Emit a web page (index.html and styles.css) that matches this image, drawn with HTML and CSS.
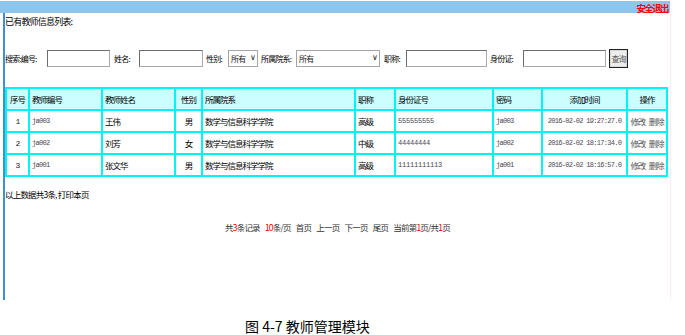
FILE: index.html
```html
<!DOCTYPE html>
<html lang="zh-CN">
<head>
    <meta charset="UTF-8">
    <title>教师管理模块</title>
    <link rel="stylesheet" href="styles.css">
</head>
<body>
    <div class="topbar"><span class="logout">安全退出</span></div>

    <div class="panel">
        <p class="title">已有教师信息列表:</p>

        <form class="search">
            <label class="lbl l-no">搜索:编号:</label>
            <input type="text" class="box w-no">
            <label class="lbl l-name">姓名:</label>
            <input type="text" class="box w-name">
            <label class="lbl l-sex">性别:</label>
            <span class="drop w-sex"><select class="sel"><option>所有</option></select></span>
            <label class="lbl l-dept">所属院系:</label>
            <span class="drop w-dept"><select class="sel"><option>所有</option></select></span>
            <label class="lbl l-rank">职称:</label>
            <input type="text" class="box w-rank">
            <label class="lbl l-id">身份证:</label>
            <input type="text" class="box w-id">
            <button type="button" class="btn">查询</button>
        </form>

        <table class="list">
            <colgroup>
                <col style="width:21px"><col style="width:71px"><col style="width:71px"><col style="width:25px"><col style="width:151px">
                <col style="width:38px"><col style="width:96px"><col style="width:47px"><col style="width:83px"><col style="width:38px">
            </colgroup>
            <thead>
                <tr>
                    <th class="c">序号</th>
                    <th>教师编号</th>
                    <th>教师姓名</th>
                    <th class="c">性别</th>
                    <th>所属院系</th>
                    <th>职称</th>
                    <th>身份证号</th>
                    <th>密码</th>
                    <th class="c">添加时间</th>
                    <th class="c">操作</th>
                </tr>
            </thead>
            <tbody>
                <tr>
                    <td class="c num">1</td>
                    <td class="code">ja003</td>
                    <td>王伟</td>
                    <td class="c">男</td>
                    <td>数学与信息科学学院</td>
                    <td>高级</td>
                    <td class="idno">555555555</td>
                    <td class="code">ja003</td>
                    <td class="c time">2016-02-02 19:27:27.0</td>
                    <td class="c ops">修改 删除</td>
                </tr>
                <tr>
                    <td class="c num">2</td>
                    <td class="code">ja002</td>
                    <td>刘芳</td>
                    <td class="c">女</td>
                    <td>数学与信息科学学院</td>
                    <td>中级</td>
                    <td class="idno">44444444</td>
                    <td class="code">ja002</td>
                    <td class="c time">2016-02-02 18:17:34.0</td>
                    <td class="c ops">修改 删除</td>
                </tr>
                <tr>
                    <td class="c num">3</td>
                    <td class="code">ja001</td>
                    <td>张文华</td>
                    <td class="c">男</td>
                    <td>数学与信息科学学院</td>
                    <td>高级</td>
                    <td class="idno">11111111113</td>
                    <td class="code">ja001</td>
                    <td class="c time">2016-02-02 18:16:57.0</td>
                    <td class="c ops">修改 删除</td>
                </tr>
            </tbody>
        </table>

        <p class="summary">以上数据共3条, 打印本页</p>

        <div class="pager">
            <span>共<em>3</em>条记录</span>
            <span><em>10</em>条/页</span>
            <span>首页</span>
            <span>上一页</span>
            <span>下一页</span>
            <span>尾页</span>
            <span>当前第<em>1</em>页/共<em>1</em>页</span>
        </div>
    </div>

    <p class="caption">图 4-7 教师管理模块</p>
</body>
</html>
```

FILE: styles.css
```css
body {
    margin: 0;
    background: #fff;
    font-family: "Noto Sans CJK SC", "Liberation Sans", sans-serif;
    color: #000;
}
.topbar {
    margin-top: 1px;
    width: 670px;
    height: 12px;
    background: #8ec6eb;
    text-align: right;
    font-size: 9.5px;
    line-height: 15px;
}
.logout {
    color: #f00;
    letter-spacing: -1.6px;
    font-weight: bold;
    padding-right: 2px;
}
.panel {
    margin-left: 3px;
    width: 665px;
    height: 287px;
    border-left: 2px solid #3d8fd6;
    border-right: 1px solid #fbeef2;
    font-size: 8px;
    letter-spacing: -0.8px;
}
.title {
    margin: 0;
    padding-top: 3px;
    font-size: 9px;
    line-height: 12px;
}
.search {
    display: flex;
    align-items: center;
    margin: 21px 0 0;
    height: 19px;
}
.lbl {
    display: inline-block;
    white-space: nowrap;
    font-size: 8px;
}
.l-no { width: 42px; }
.l-name { width: 21px; margin-left: 4px; margin-right: 4px; }
.l-sex { width: 19px; margin-left: 3px; margin-right: 3px; }
.l-dept { width: 33px; margin-left: 3px; margin-right: 2px; }
.l-rank { width: 19px; margin-left: 4px; margin-right: 3px; }
.l-id { width: 30px; margin-left: 3px; margin-right: 3px; }
.box {
    box-sizing: border-box;
    height: 17px;
    margin: 0;
    padding: 0 2px;
    border: 1px solid #7a7a7a;
    border-color: #6d6d6d #a8a8a8 #a8a8a8 #6d6d6d;
    background: #fff;
}
.w-no { width: 63px; }
.w-name { width: 64px; }
.w-rank { width: 81px; }
.w-id { width: 83px; }
.drop {
    position: relative;
    display: inline-block;
    height: 17px;
}
.drop::after {
    content: "∨";
    position: absolute;
    right: 3px;
    top: 3px;
    font-family: "DejaVu Sans", sans-serif;
    font-size: 8px;
    line-height: 10px;
    color: #222;
    pointer-events: none;
}
.sel {
    appearance: none;
    -webkit-appearance: none;
    box-sizing: border-box;
    width: 100%;
    height: 17px;
    margin: 0;
    padding: 0 0 0 2px;
    border: 1px solid #a5a5a5;
    border-radius: 0;
    background: #fff;
    font-family: inherit;
    font-size: 8px;
    letter-spacing: -0.8px;
    color: #222;
}
.w-sex { width: 30px; }
.w-dept { width: 84px; }
.btn {
    box-sizing: border-box;
    width: 19px;
    height: 19px;
    margin-left: 3px;
    padding: 0;
    border: 1px solid #222;
    box-shadow: inset 0 0 0 1px #d8d8d8;
    background: #ececec;
    font-family: inherit;
    font-size: 8px;
    letter-spacing: -1px;
    color: #555;
}
.list {
    margin-top: 19px;
    table-layout: fixed;
    width: 663px;
    border-collapse: separate;
    border-spacing: 2px;
    background: #00f3f5;
}
.list th,
.list td {
    height: 18px;
    padding: 1px 2px;
    text-align: left;
    white-space: nowrap;
    overflow: hidden;
    font-size: 8.5px;
    font-weight: normal;
    letter-spacing: -1px;
}
.list th {
    background: #ccfeff;
}
.list td {
    background: #fff;
}
.list .c {
    text-align: center;
}
.list .num,
.list .code,
.list .time,
.list .idno {
    font-family: "Liberation Mono", monospace;
    font-size: 7px;
    letter-spacing: -0.7px;
    color: #4a4752;
}
.list .idno {
    letter-spacing: -0.2px;
}
.list .num {
    font-size: 8px;
    color: #222;
}
.list .ops {
    color: #555;
    padding: 1px 0;
    letter-spacing: -1.2px;
    word-spacing: 3px;
}
.summary {
    margin: 11px 0 0;
    font-size: 8.5px;
    line-height: 12px;
}
.pager {
    margin-top: 21px;
    text-align: center;
    font-size: 8.5px;
    line-height: 12px;
    color: #333;
}
.pager span {
    margin: 0 2px;
}
.pager em {
    font-style: normal;
    color: #e00;
}
.caption {
    margin: 18px 0 0;
    padding-left: 245px;
    font-size: 14px;
    line-height: 16px;
    color: #000;
}
```
